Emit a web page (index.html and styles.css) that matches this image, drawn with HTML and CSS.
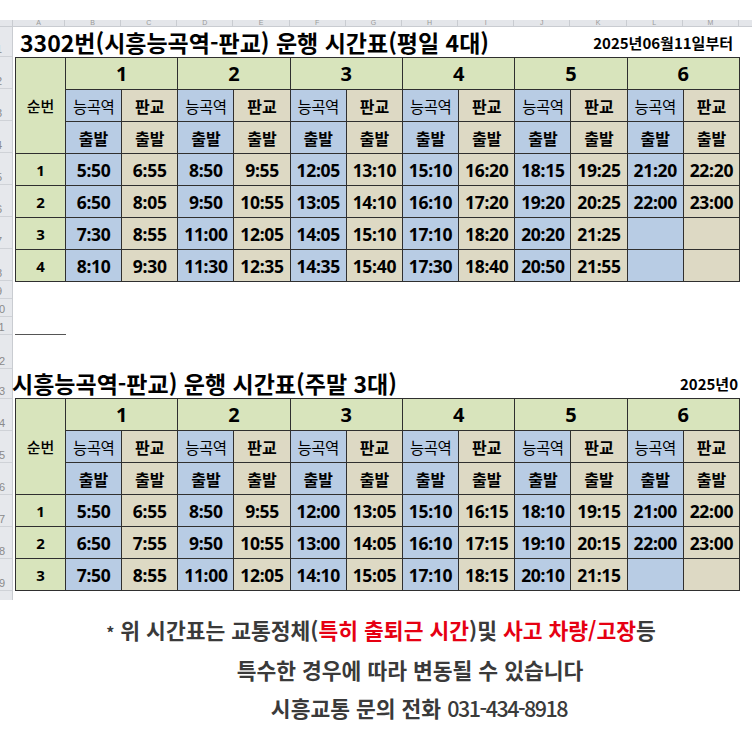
FILE: index.html
```html
<!DOCTYPE html>
<html lang="ko">
<head>
<meta charset="utf-8">
<link rel="stylesheet" href="styles.css">
</head>
<body>
<div class="top-gap"></div>
<div class="sheet">
  <div class="colbar">
    <span class="cl cl-corner"></span>
    <span class="cl cl-a">A</span>
    <span class="cl">B</span><span class="cl">C</span><span class="cl">D</span><span class="cl">E</span>
    <span class="cl">F</span><span class="cl">G</span><span class="cl">H</span><span class="cl">I</span>
    <span class="cl">J</span><span class="cl">K</span><span class="cl">L</span><span class="cl">M</span>
    <span class="cl cl-n"></span>
  </div>
  <div class="grid">
    <div class="rowhdr">
      <div class="rn r30"><span>1</span></div>
      <div class="rn r32"><span>2</span></div>
      <div class="rn r32"><span>3</span></div>
      <div class="rn r32"><span>4</span></div>
      <div class="rn r32"><span>5</span></div>
      <div class="rn r32"><span>6</span></div>
      <div class="rn r32"><span>7</span></div>
      <div class="rn r32"><span>8</span></div>
      <div class="rn r18"><span>9</span></div>
      <div class="rn r18"><span>10</span></div>
      <div class="rn r18"><span>11</span></div>
      <div class="rn r33"><span>12</span></div>
      <div class="rn r30"><span>13</span></div>
      <div class="rn r32"><span>14</span></div>
      <div class="rn r32"><span>15</span></div>
      <div class="rn r32"><span>16</span></div>
      <div class="rn r32"><span>17</span></div>
      <div class="rn r32"><span>18</span></div>
      <div class="rn r32"><span>19</span></div>
      <div class="rn r10"></div>
    </div>
    <div class="content">
      <div class="title-row">
        <div class="title title-1">3302번(시흥능곡역-판교) 운행 시간표(평일 4대)</div>
        <div class="date">2025년06월11일부터</div>
      </div>
      <table class="tt">
        <colgroup><col class="c-seq"><col class="c-t"><col class="c-t"><col class="c-t"><col class="c-t"><col class="c-t"><col class="c-t"><col class="c-t"><col class="c-t"><col class="c-t"><col class="c-t"><col class="c-t"><col class="c-t"></colgroup>
        <tr>
          <td class="g seq-h" rowspan="3">순번</td>
          <td class="g no" colspan="2">1</td><td class="g no" colspan="2">2</td><td class="g no" colspan="2">3</td>
          <td class="g no" colspan="2">4</td><td class="g no" colspan="2">5</td><td class="g no" colspan="2">6</td>
        </tr>
        <tr>
          <td class="b st">능곡역</td><td class="t st2">판교</td><td class="b st">능곡역</td><td class="t st2">판교</td>
          <td class="b st">능곡역</td><td class="t st2">판교</td><td class="b st">능곡역</td><td class="t st2">판교</td>
          <td class="b st">능곡역</td><td class="t st2">판교</td><td class="b st">능곡역</td><td class="t st2">판교</td>
        </tr>
        <tr>
          <td class="b dep">출발</td><td class="t dep">출발</td><td class="b dep">출발</td><td class="t dep">출발</td>
          <td class="b dep">출발</td><td class="t dep">출발</td><td class="b dep">출발</td><td class="t dep">출발</td>
          <td class="b dep">출발</td><td class="t dep">출발</td><td class="b dep">출발</td><td class="t dep">출발</td>
        </tr>
        <tr>
          <td class="g sq">1</td>
          <td class="b tm">5:50</td><td class="t tm">6:55</td><td class="b tm">8:50</td><td class="t tm">9:55</td>
          <td class="b tm">12:05</td><td class="t tm">13:10</td><td class="b tm">15:10</td><td class="t tm">16:20</td>
          <td class="b tm">18:15</td><td class="t tm">19:25</td><td class="b tm">21:20</td><td class="t tm">22:20</td>
        </tr>
        <tr>
          <td class="g sq">2</td>
          <td class="b tm">6:50</td><td class="t tm">8:05</td><td class="b tm">9:50</td><td class="t tm">10:55</td>
          <td class="b tm">13:05</td><td class="t tm">14:10</td><td class="b tm">16:10</td><td class="t tm">17:20</td>
          <td class="b tm">19:20</td><td class="t tm">20:25</td><td class="b tm">22:00</td><td class="t tm">23:00</td>
        </tr>
        <tr>
          <td class="g sq">3</td>
          <td class="b tm">7:30</td><td class="t tm">8:55</td><td class="b tm">11:00</td><td class="t tm">12:05</td>
          <td class="b tm">14:05</td><td class="t tm">15:10</td><td class="b tm">17:10</td><td class="t tm">18:20</td>
          <td class="b tm">20:20</td><td class="t tm">21:25</td><td class="b tm"></td><td class="t tm"></td>
        </tr>
        <tr>
          <td class="g sq">4</td>
          <td class="b tm">8:10</td><td class="t tm">9:30</td><td class="b tm">11:30</td><td class="t tm">12:35</td>
          <td class="b tm">14:35</td><td class="t tm">15:40</td><td class="b tm">17:30</td><td class="t tm">18:40</td>
          <td class="b tm">20:50</td><td class="t tm">21:55</td><td class="b tm"></td><td class="t tm"></td>
        </tr>
      </table>
      <div class="gap-a"></div>
      <div class="rule"></div>
      <div class="gap-b"></div>
      <div class="title-row">
        <div class="title title-2">시흥능곡역-판교) 운행 시간표(주말 3대)</div>
        <div class="date date-2">2025년0</div>
      </div>
      <table class="tt">
        <colgroup><col class="c-seq"><col class="c-t"><col class="c-t"><col class="c-t"><col class="c-t"><col class="c-t"><col class="c-t"><col class="c-t"><col class="c-t"><col class="c-t"><col class="c-t"><col class="c-t"><col class="c-t"></colgroup>
        <tr>
          <td class="g seq-h" rowspan="3">순번</td>
          <td class="g no" colspan="2">1</td><td class="g no" colspan="2">2</td><td class="g no" colspan="2">3</td>
          <td class="g no" colspan="2">4</td><td class="g no" colspan="2">5</td><td class="g no" colspan="2">6</td>
        </tr>
        <tr>
          <td class="b st">능곡역</td><td class="t st2">판교</td><td class="b st">능곡역</td><td class="t st2">판교</td>
          <td class="b st">능곡역</td><td class="t st2">판교</td><td class="b st">능곡역</td><td class="t st2">판교</td>
          <td class="b st">능곡역</td><td class="t st2">판교</td><td class="b st">능곡역</td><td class="t st2">판교</td>
        </tr>
        <tr>
          <td class="b dep">출발</td><td class="t dep">출발</td><td class="b dep">출발</td><td class="t dep">출발</td>
          <td class="b dep">출발</td><td class="t dep">출발</td><td class="b dep">출발</td><td class="t dep">출발</td>
          <td class="b dep">출발</td><td class="t dep">출발</td><td class="b dep">출발</td><td class="t dep">출발</td>
        </tr>
        <tr>
          <td class="g sq">1</td>
          <td class="b tm">5:50</td><td class="t tm">6:55</td><td class="b tm">8:50</td><td class="t tm">9:55</td>
          <td class="b tm">12:00</td><td class="t tm">13:05</td><td class="b tm">15:10</td><td class="t tm">16:15</td>
          <td class="b tm">18:10</td><td class="t tm">19:15</td><td class="b tm">21:00</td><td class="t tm">22:00</td>
        </tr>
        <tr>
          <td class="g sq">2</td>
          <td class="b tm">6:50</td><td class="t tm">7:55</td><td class="b tm">9:50</td><td class="t tm">10:55</td>
          <td class="b tm">13:00</td><td class="t tm">14:05</td><td class="b tm">16:10</td><td class="t tm">17:15</td>
          <td class="b tm">19:10</td><td class="t tm">20:15</td><td class="b tm">22:00</td><td class="t tm">23:00</td>
        </tr>
        <tr>
          <td class="g sq">3</td>
          <td class="b tm">7:50</td><td class="t tm">8:55</td><td class="b tm">11:00</td><td class="t tm">12:05</td>
          <td class="b tm">14:10</td><td class="t tm">15:05</td><td class="b tm">17:10</td><td class="t tm">18:15</td>
          <td class="b tm">20:10</td><td class="t tm">21:15</td><td class="b tm"></td><td class="t tm"></td>
        </tr>
      </table>
    </div>
  </div>
</div>
<div class="notes">
  <p class="n1"><span class="ast">*</span> 위 시간표는 교통정체(<span class="red">특히 출퇴근 시간</span>)및 <span class="red">사고 차량/고장</span>등</p>
  <p class="n2">특수한 경우에 따라 변동될 수 있습니다</p>
  <p class="n3">시흥교통 문의 전화 <span class="tel">031-434-8918</span></p>
</div>
</body>
</html>
```
FILE: styles.css
```css
* { box-sizing: border-box; }
html, body { margin: 0; padding: 0; background: #fff; }
body {
  width: 752px;
  height: 735px;
  overflow: hidden;
  font-family: "Noto Sans", "Noto Sans CJK KR", sans-serif;
  color: #000;
}
.top-gap { height: 20px; }
.sheet {
  width: 752px;
  height: 580px;
  overflow: hidden;
  background: #fff;
}
.colbar {
  display: flex;
  height: 7px;
  background: #e4e6ea;
  border-bottom: 1px solid #c9ccd1;
  overflow: hidden;
}
.cl {
  flex: none;
  width: 56.17px;
  border-right: 1px solid #c9ccd1;
  font-family: "Liberation Sans", sans-serif;
  font-size: 7px;
  line-height: 6px;
  color: #999;
  text-align: center;
}
.cl-corner { width: 13px; }
.cl-a { width: 52px; }
.cl-n { width: 13px; border-right: none; }
.grid { display: flex; width: 752px; }
.rowhdr {
  flex: none;
  width: 13px;
  background: #e6e8ec;
  border-right: 1px solid #c9ccd1;
}
.rn {
  overflow: hidden;
  border-bottom: 1px solid #cfd2d7;
  font-family: "Liberation Sans", sans-serif;
  font-size: 11px;
  color: #8a8a8a;
  display: flex;
  align-items: flex-end;
  white-space: nowrap;
}
.rn span { display: block; width: 22px; margin-left: -12px; text-align: center; line-height: 14px; }
.r30 { height: 30px; }
.r32 { height: 32px; }
.r18 { height: 18px; }
.r33 { height: 34px; }
.r10 { height: 10px; }
.content { flex: none; width: 739px; padding-left: 1px; }
.title-row {
  width: 739px;
  height: 30px;
  display: flex;
  align-items: flex-end;
  justify-content: space-between;
}
.title {
  font-family: "Noto Sans CJK KR", sans-serif;
  font-weight: 700;
  font-size: 23px;
  line-height: 30px;
  white-space: nowrap;
}
.title-1 { padding-left: 6px; }
.title-2 { margin-left: -2px; }
.date {
  flex: none;
  font-family: "Noto Sans CJK KR", sans-serif;
  font-weight: 700;
  font-size: 15px;
  line-height: 22px;
  padding-bottom: 3px;
  padding-right: 20px;
  white-space: nowrap;
}
.date-2 { padding-right: 15px; }
.tt {
  border-collapse: collapse;
  table-layout: fixed;
  width: 724px;
  margin-left: 1px;
}
.c-seq { width: 50px; }
.c-t { width: 56.17px; }
.tt tr { height: 32px; }
.tt td {
  border: 1px solid #2f2f2f;
  padding: 0;
  text-align: center;
  vertical-align: middle;
  white-space: nowrap;
  overflow: hidden;
}
.g { background: #d8e4bc; }
.b { background: #b8cce4; }
.t { background: #ddd9c4; }
.no { font-weight: 700; font-size: 20px; }
.seq-h { font-family: "Noto Sans CJK KR", sans-serif; font-size: 15px; font-weight: 500; }
.st { font-family: "Noto Sans CJK KR", sans-serif; font-size: 15.5px; font-weight: 400; letter-spacing: -0.5px; }
.st2 { font-family: "Noto Sans CJK KR", sans-serif; font-size: 16px; font-weight: 700; }
.dep { font-family: "Noto Sans CJK KR", sans-serif; font-size: 16px; font-weight: 700; }
.tm { font-size: 17.5px; font-weight: 700; letter-spacing: -0.3px; }
.sq { font-size: 15px; font-weight: 700; }
.gap-a { height: 52px; }
.rule { width: 51px; height: 1px; background: #555; margin-left: 1px; }
.gap-b { height: 33px; }
.notes {
  font-family: "Noto Sans CJK KR", sans-serif;
  font-weight: 700;
  font-size: 21.5px;
  color: #3a3a3a;
  text-align: center;
  padding-top: 11px;
}
.notes p { margin: 0; line-height: 38px; white-space: nowrap; }
.n1 { padding-left: 10px; }
.n2 { padding-left: 68px; }
.n3 { padding-left: 86px; margin-top: 3px; }
.tel { font-weight: 500; letter-spacing: -1.5px; }
.ast { font-size: 16px; }
.red { color: #e60012; }
```
